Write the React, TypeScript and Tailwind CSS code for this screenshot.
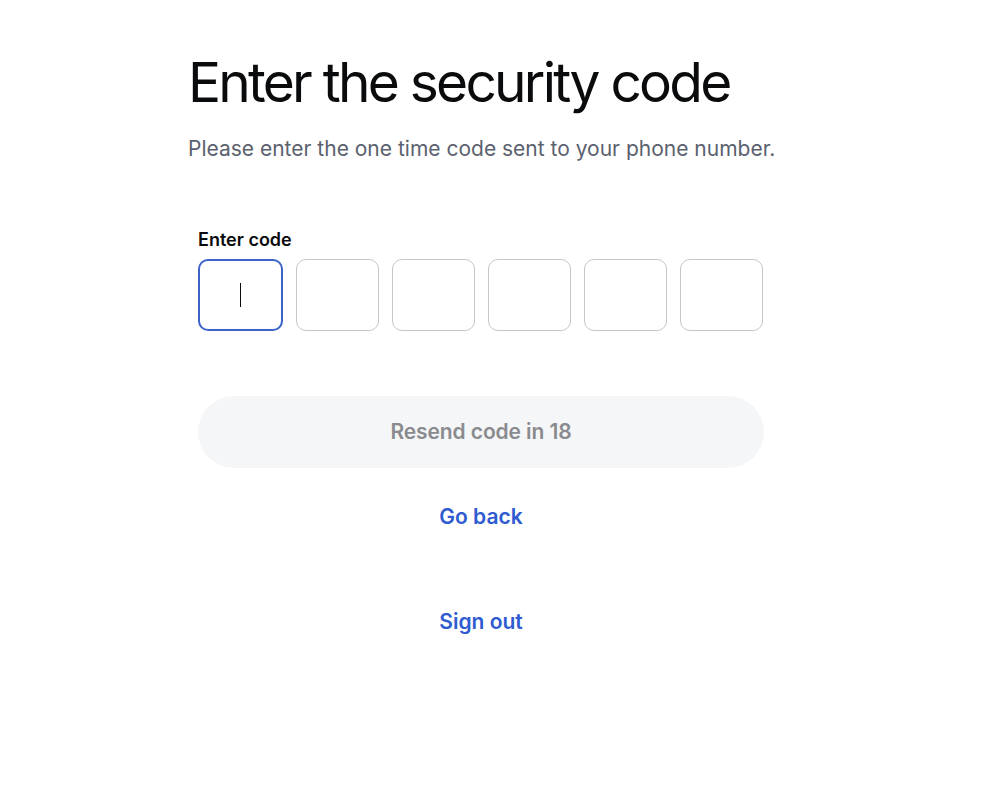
import { useState } from 'react';

export default function App() {
  const [digits] = useState(['', '', '', '', '', '']);

  return (
    <div className="min-h-screen bg-white" style={{ fontFamily: 'Inter, "Noto Sans", sans-serif' }}>
      <div className="pl-[188px] pt-[52px]">
        <h1 className="text-[55px] leading-[60px] font-normal text-[#0a0b0d] tracking-[-0.05em]">
          Enter the security code
        </h1>
        <p className="mt-[24px] text-[21px] leading-[26px] text-[#5b616e]">
          Please enter the one time code sent to your phone number.
        </p>

        <div className="ml-[10px] w-[566px]">
          <label className="block mt-[68px] text-[18px] leading-[20px] font-semibold text-[#0a0b0d]">
            Enter code
          </label>
          <div className="mt-[9px] flex gap-[13px]">
            {digits.map((d, i) => (
              <div
                key={i}
                className={
                  i === 0
                    ? 'w-[85px] h-[72px] rounded-[10px] border-2 border-[#3d63c9] flex items-center justify-center'
                    : 'w-[83px] h-[72px] rounded-[10px] border border-[#c6c6c8] flex items-center justify-center'
                }
              >
                {i === 0 ? <span className="block w-[1.5px] h-[24px] bg-[#0a0b0d]" /> : d}
              </div>
            ))}
          </div>

          <button
            disabled
            className="mt-[65px] w-[566px] h-[72px] rounded-full bg-[#f5f6f8] text-[21px] font-semibold text-[#8a8b8e] tracking-[-0.005em]"
          >
            Resend code in 18
          </button>

          <div className="flex flex-col items-center">
            <button className="mt-[36px] text-[21px] leading-[26px] font-semibold text-[#2f5bd0]">
              Go back
            </button>
            <button className="mt-[79px] text-[21px] leading-[26px] font-semibold text-[#2f5bd0]">
              Sign out
            </button>
          </div>
        </div>
      </div>
    </div>
  );
}
